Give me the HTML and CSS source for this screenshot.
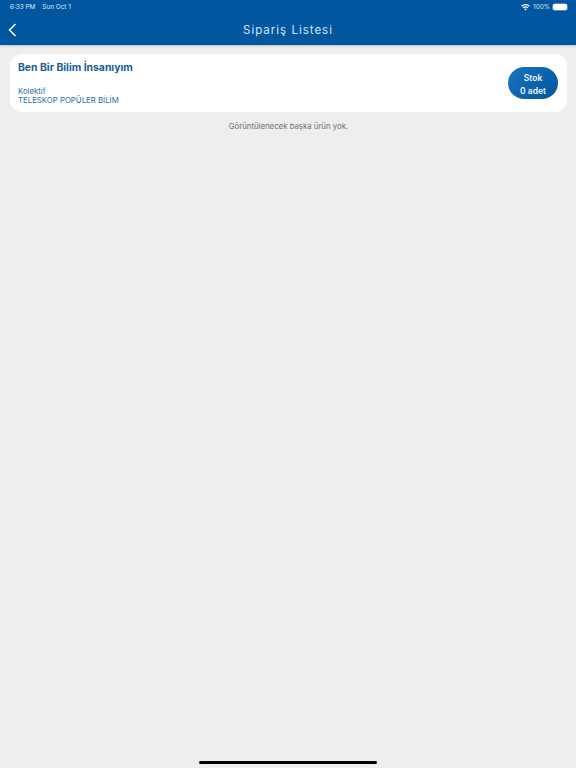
FILE: index.html
```html
<!DOCTYPE html>
<html lang="tr">
<head>
    <meta charset="UTF-8">
    <meta name="viewport" content="width=device-width, initial-scale=1.0">
    <title>Sipariş Listesi</title>
    <link rel="stylesheet" href="styles.css">
</head>
<body>
    <header class="app-header">
        <!-- Status bar -->
        <div class="status-bar">
            <div class="status-left">
                <span>6:33 PM</span>
                <span>Sun Oct 1</span>
            </div>
            <div class="status-right">
                <svg class="wifi-icon" viewBox="0 0 16 12" width="9" height="7">
                    <path d="M8 11.5 5.6 8.7a3.6 3.6 0 0 1 4.8 0zM4.4 7.4 3 5.8a7.6 7.6 0 0 1 10 0l-1.4 1.6a5.5 5.5 0 0 0-7.2 0zM1.9 4.5.4 2.9a11.4 11.4 0 0 1 15.2 0l-1.5 1.6a9.3 9.3 0 0 0-12.2 0z" fill="#fff"/>
                </svg>
                <span>100%</span>
                <div class="battery"></div>
            </div>
        </div>

        <!-- Nav bar -->
        <div class="nav-bar">
            <svg class="back-icon" viewBox="0 0 9 14" width="9" height="14">
                <path d="M7.5 1 1.5 7l6 6" fill="none" stroke="#fff" stroke-width="1.5"/>
            </svg>
            <h1 class="nav-title">Sipariş Listesi</h1>
        </div>
    </header>

    <main class="content">
        <div class="order-card">
            <div class="order-info">
                <h2 class="order-title">Ben Bir Bilim İnsanıyım</h2>
                <div class="order-meta">
                    <div>Kolektif</div>
                    <div>TELESKOP POPÜLER BİLİM</div>
                </div>
            </div>
            <div class="stock-badge">
                <span>Stok</span>
                <span>0 adet</span>
            </div>
        </div>
        <p class="empty-note">Görüntülenecek başka ürün yok.</p>
    </main>

    <div class="home-indicator"></div>
</body>
</html>
```

FILE: styles.css
```css
/* General styles */
html, body {
    height: 100%;
}

body {
    margin: 0;
    display: flex;
    flex-direction: column;
    font-family: Inter, "Liberation Sans", sans-serif;
    background-color: #eeeeee;
}

/* Header */
.app-header {
    height: 45px;
    background-color: #00569f;
    box-shadow: 0 1px 2px rgba(0, 0, 0, 0.2);
    color: #fff;
}

.status-bar {
    display: flex;
    justify-content: space-between;
    align-items: center;
    height: 14px;
    padding: 0 9px 0 10px;
    font-size: 6.4px;
    color: #dcebf6;
}

.status-left {
    display: flex;
    gap: 7px;
}

.status-right {
    display: flex;
    align-items: center;
    gap: 3px;
}

.battery {
    width: 14px;
    height: 6px;
    border-radius: 2px;
    background-color: #fff;
    box-shadow: 0 0 0 0.5px #9fc0dc;
}

.nav-bar {
    display: flex;
    align-items: center;
    justify-content: center;
    position: relative;
    height: 31px;
}

.back-icon {
    position: absolute;
    left: 8px;
    top: 9px;
}

.nav-title {
    margin: 0;
    font-size: 11.5px;
    font-weight: 400;
    letter-spacing: 1px;
    color: #d5e6f3;
}

/* Content */
.content {
    flex: 1;
    padding: 9px 9px 0 10px;
}

.order-card {
    display: flex;
    justify-content: space-between;
    align-items: center;
    height: 58px;
    padding: 0 9px 0 8px;
    box-sizing: border-box;
    background-color: #fff;
    border-radius: 12px;
}

.order-info {
    color: #2a6ea6;
}

.order-title {
    margin: 0 0 13px;
    font-size: 10.4px;
    font-weight: 700;
    color: #155f99;
}

.order-meta {
    font-size: 7.8px;
    line-height: 9.5px;
}

.stock-badge {
    display: flex;
    flex-direction: column;
    align-items: center;
    justify-content: center;
    gap: 3px;
    width: 50px;
    height: 32px;
    padding-top: 2px;
    box-sizing: border-box;
    border-radius: 16px;
    background: linear-gradient(135deg, #1a72bd, #00569f);
    color: #f2f7fb;
    font-size: 8.5px;
    font-weight: 600;
}

.empty-note {
    margin: 9px 0 0;
    text-align: center;
    font-size: 7.8px;
    color: #6e6e6e;
}

.home-indicator {
    position: fixed;
    left: 199px;
    bottom: 4px;
    width: 178px;
    height: 3px;
    border-radius: 2px;
    background-color: #000;
}
```
